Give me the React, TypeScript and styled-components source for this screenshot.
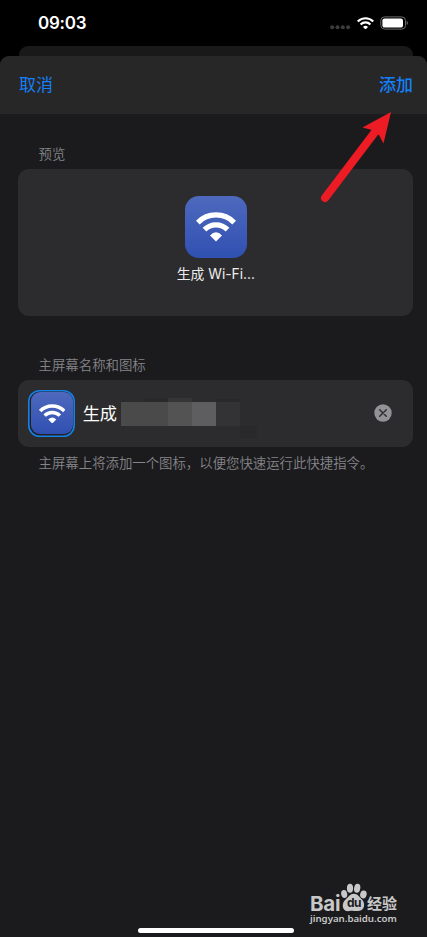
import React from 'react';
import styled, { createGlobalStyle } from 'styled-components';

const GlobalStyle = createGlobalStyle`
  * { box-sizing: border-box; }
  body { margin: 0; background: #000; }
`;

const Screen = styled.div`
  position: relative;
  display: flex;
  flex-direction: column;
  width: 427px;
  height: 937px;
  overflow: hidden;
  background: #000;
  color: #fff;
  font-family: Inter, 'Noto Sans CJK SC', sans-serif;
`;

const StatusBar = styled.header`
  display: flex;
  flex: none;
  align-items: center;
  justify-content: space-between;
  height: 46px;
  padding: 0 19px 0 38px;
`;

const Clock = styled.span`
  font-size: 17px;
  font-weight: 600;
  line-height: 20px;
  letter-spacing: -0.25px;
`;

const StatusIcons = styled.div`
  display: flex;
  align-items: center;
  gap: 6px;
`;

const BackCard = styled.div`
  flex: none;
  height: 10px;
  margin: 0 14px 0 19px;
  border-radius: 9px 9px 0 0;
  background: #19191a;
`;

const Sheet = styled.main`
  display: flex;
  flex: 1;
  flex-direction: column;
  overflow: hidden;
  border-radius: 9px 9px 0 0;
  background: #1b1b1d;
`;

const NavBar = styled.nav`
  display: flex;
  flex: none;
  align-items: center;
  justify-content: space-between;
  height: 58px;
  padding: 0 14px 0 19px;
  background: #272728;
`;

const NavButton = styled.button<{ $strong?: boolean }>`
  padding: 0;
  border: 0;
  background: none;
  color: #1580f8;
  font: inherit;
  font-size: 17px;
  font-weight: ${(p) => (p.$strong ? 500 : 400)};
  line-height: 24px;
`;

const Section = styled.section<{ $top: number }>`
  display: flex;
  flex-direction: column;
  margin: ${(p) => p.$top}px 13.6px 0 18.4px;
`;

const Caption = styled.p`
  margin: 0 0 0 20.2px;
  color: #85858a;
  font-size: 13.4px;
  font-weight: 350;
  line-height: 20px;
  white-space: nowrap;
`;

const PreviewCard = styled.div`
  display: flex;
  flex-direction: column;
  align-items: center;
  height: 147px;
  margin-top: 5.4px;
  padding-top: 26.6px;
  border-radius: 11px;
  background: #2c2c2e;
`;

const Tile = styled.div<{ $size: number; $radius: number }>`
  display: flex;
  flex: none;
  align-items: center;
  justify-content: center;
  width: ${(p) => p.$size}px;
  height: ${(p) => p.$size}px;
  border-radius: ${(p) => p.$radius}px;
  background: linear-gradient(#4e69bd, #3050b2);
`;

const AppName = styled.span`
  margin-top: 6.4px;
  color: #ececed;
  font-size: 13.8px;
  line-height: 20px;
  white-space: nowrap;
`;

const NameRow = styled.div`
  display: flex;
  align-items: center;
  height: 67px;
  margin: 5px 0 6px;
  padding: 0 21.5px 0 10.1px;
  border-radius: 11px;
  background: #2c2c2e;
`;

const IconButton = styled.button`
  display: flex;
  align-items: center;
  justify-content: center;
  width: 47px;
  height: 47px;
  padding: 0;
  border: 0;
  border-radius: 11.5px;
  background: #222224;
  box-shadow: inset 0 0 0 1.6px #1580e6;
`;

const NameText = styled.span`
  margin-left: 7.2px;
  padding-top: 2px;
  font-size: 17.2px;
  line-height: 24px;
`;

const Mosaic = styled.svg`
  display: block;
  margin: 9px 0 0 3.7px;
`;

const ClearButton = styled.button`
  display: flex;
  margin-left: auto;
  padding: 0;
  border: 0;
  background: none;
`;

const HomeIndicator = styled.div`
  position: absolute;
  bottom: 4px;
  left: 138px;
  width: 156px;
  height: 5px;
  border-radius: 3px;
  background: #fff;
`;

const ArrowMark = styled.svg`
  position: absolute;
  top: 108px;
  left: 316px;
`;

const Watermark = styled.div`
  position: absolute;
  top: 883px;
  left: 310px;
  display: flex;
  flex-direction: column;
  width: 90px;
  color: #c8c8c9;
`;

const Brand = styled.div`
  display: flex;
  align-items: flex-end;
  height: 29px;
`;

const BrandLatin = styled.span`
  width: 31px;
  font-size: 20.5px;
  font-weight: 700;
  line-height: 17px;
  letter-spacing: -0.2px;
`;

const Paw = styled.div`
  position: relative;
  width: 26px;
  height: 29px;
`;

const PawText = styled.span`
  position: absolute;
  top: 14px;
  left: 6px;
  color: #1b1b1d;
  font-size: 12px;
  font-weight: 700;
  line-height: 12px;
  letter-spacing: -0.5px;
`;

const BrandChinese = styled.span`
  font-size: 15px;
  font-weight: 700;
  line-height: 17px;
  white-space: nowrap;
`;

const Site = styled.span`
  font-family: 'Noto Sans', sans-serif;
  font-size: 9.7px;
  font-weight: 600;
  line-height: 14px;
  letter-spacing: -0.02px;
  white-space: nowrap;
`;

function WifiGlyph({ width }: { width: number }) {
  return (
    <svg width={width} height={width * 0.75} viewBox="0 0 40 30" fill="none">
      <path d="M1.8 10.6C11.6.4 28.4.4 38.2 10.6M8.5 17.6C14.8 11.2 25.2 11.2 31.5 17.6" stroke="#fff" strokeWidth="5.2" />
      <path d="M14 23.4Q20 17.2 26 23.4L20 29.4Z" fill="#fff" />
    </svg>
  );
}

function StatusSymbols() {
  return (
    <StatusIcons>
      <svg width="21" height="14" viewBox="0 0 21 14" fill="#3c3c3d">
        <circle cx="2.2" cy="11.2" r="2" />
        <circle cx="7.5" cy="11.2" r="2" />
        <circle cx="12.8" cy="11.2" r="2" />
        <circle cx="18.1" cy="11.2" r="2" />
      </svg>
      <WifiGlyph width={17} />
      <svg width="28" height="14" viewBox="0 0 28 14">
        <rect x=".8" y=".9" width="24.7" height="12.2" rx="3.7" fill="none" stroke="#6b6b6c" />
        <rect x="2.4" y="2.4" width="20.6" height="9.2" rx="2.2" fill="#fff" />
        <path d="M26.7 5v4q1.2-.7 1.2-2T26.7 5" fill="#737374" />
      </svg>
    </StatusIcons>
  );
}

export default function App() {
  return (
    <Screen>
      <GlobalStyle />
      <StatusBar>
        <Clock>09:03</Clock>
        <StatusSymbols />
      </StatusBar>
      <BackCard />
      <Sheet>
        <NavBar>
          <NavButton>取消</NavButton>
          <NavButton $strong>添加</NavButton>
        </NavBar>
        <Section $top={30}>
          <Caption>预览</Caption>
          <PreviewCard>
            <Tile $size={62} $radius={14}>
              <WifiGlyph width={40} />
            </Tile>
            <AppName>生成 Wi-Fi...</AppName>
          </PreviewCard>
        </Section>
        <Section $top={38.6}>
          <Caption>主屏幕名称和图标</Caption>
          <NameRow>
            <IconButton aria-label="图标">
              <Tile $size={42} $radius={9}>
                <WifiGlyph width={26.5} />
              </Tile>
            </IconButton>
            <NameText>生成</NameText>
            <Mosaic width="137" height="40" viewBox="0 0 137 40" shapeRendering="crispEdges">
              <path d="M0 4h47v24H0z" fill="#4a4a4b" />
              <path d="M47 4h24v24H47z" fill="#535354" />
              <path d="M47 0h24v4H47z" fill="#353536" />
              <path d="M71 4h24v24H71z" fill="#5e5e60" />
              <path d="M95 4h24v24H95z" fill="#333335" />
              <path d="M23 0h24v4H23zM95 1h24v3H95zM119 28h17v12h-17z" fill="#29292b" />
            </Mosaic>
            <ClearButton aria-label="清除">
              <svg width="18" height="18" viewBox="0 0 18 18">
                <circle cx="9" cy="9" r="8.7" fill="#929297" />
                <path d="M5.7 5.7l6.6 6.6m0-6.6l-6.6 6.6" stroke="#2c2c2e" strokeWidth="1.4" strokeLinecap="round" />
              </svg>
            </ClearButton>
          </NameRow>
          <Caption>主屏幕上将添加一个图标，以便您快速运行此快捷指令。</Caption>
        </Section>
      </Sheet>
      <ArrowMark width="80" height="96" viewBox="0 0 80 96">
        <path d="M9 90L59 24" stroke="#ed1c24" strokeWidth="8" strokeLinecap="round" />
        <path d="M75 4L46.5 19.5L56 22L63 27L67.5 35.5Z" fill="#ed1c24" />
      </ArrowMark>
      <Watermark>
        <Brand>
          <BrandLatin>Bai</BrandLatin>
          <Paw>
            <svg width="26" height="29" viewBox="0 0 26 29" fill="#c8c8c9">
              <ellipse cx="3.2" cy="11" rx="3" ry="4.1" transform="rotate(-12 3.2 11)" />
              <ellipse cx="9" cy="5.2" rx="3.1" ry="4.5" />
              <ellipse cx="16.2" cy="5.2" rx="3.1" ry="4.5" transform="rotate(10 16.2 5.2)" />
              <ellipse cx="22.4" cy="11.4" rx="3.2" ry="4" transform="rotate(15 22.4 11.4)" />
              <path d="M12.8 10.8c3.8 0 5.2 3 7.7 5.3 4 3.5 3.8 11.7-3.2 12-3 .1-6-.6-9 0C.6 28.8.2 20.1 4.6 16.4c2.7-2 4.4-5.6 8.2-5.6" />
            </svg>
            <PawText>du</PawText>
          </Paw>
          <BrandChinese>经验</BrandChinese>
        </Brand>
        <Site>jingyan.baidu.com</Site>
      </Watermark>
      <HomeIndicator />
    </Screen>
  );
}
